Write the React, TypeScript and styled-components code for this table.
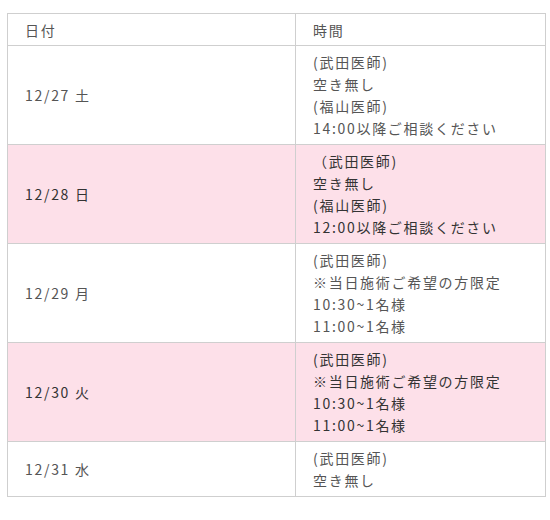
import styled, { createGlobalStyle } from 'styled-components';

const GlobalStyle = createGlobalStyle`
  body {
    margin: 0;
    background: #fff;
    font-family: 'Noto Sans CJK JP', 'Noto Sans', sans-serif;
  }
`;

const rows = [
  { date: '12/27 土', pink: false, lines: ['(武田医師)', '空き無し', '(福山医師)', '14:00以降ご相談ください'] },
  { date: '12/28 日', pink: true, lines: ['（武田医師)', '空き無し', '(福山医師)', '12:00以降ご相談ください'] },
  { date: '12/29 月', pink: false, lines: ['(武田医師)', '※当日施術ご希望の方限定', '10:30~1名様', '11:00~1名様'] },
  { date: '12/30 火', pink: true, lines: ['(武田医師)', '※当日施術ご希望の方限定', '10:30~1名様', '11:00~1名様'] },
  { date: '12/31 水', pink: false, lines: ['(武田医師)', '空き無し'] },
];

const App = () => {
  return (
    <Page>
      <GlobalStyle />
      <Table>
        <colgroup>
          <col style={{ width: 288 }} />
          <col />
        </colgroup>
        <thead>
          <tr>
            <HeadCell>日付</HeadCell>
            <HeadCell>時間</HeadCell>
          </tr>
        </thead>
        <tbody>
          {rows.map((r) => (
            <Row key={r.date} $pink={r.pink}>
              <Cell>{r.date}</Cell>
              <Cell>
                {r.lines.map((l, i) => (
                  <Line key={i}>{l}</Line>
                ))}
              </Cell>
            </Row>
          ))}
        </tbody>
      </Table>
    </Page>
  );
};

const Page = styled.div`
  padding: 13px 4px 0 7px;
`;

const Table = styled.table`
  width: 539px;
  border-collapse: collapse;
  table-layout: fixed;
  font-size: 14px;
  line-height: 22px;
  letter-spacing: 1.7px;
  color: #555;
`;

const HeadCell = styled.th`
  border: 1px solid #cfcfcf;
  padding: 5px 17px 4px;
  text-align: left;
  font-weight: 400;
  color: #555;
`;

const Row = styled.tr<{ $pink: boolean }>`
  background: ${(p) => (p.$pink ? '#fde0e9' : '#fff')};
  color: ${(p) => (p.$pink ? '#333' : '#555')};
`;

const Cell = styled.td`
  border: 1px solid #cfcfcf;
  padding: 5px 17px;
  vertical-align: middle;
`;

const Line = styled.div``;

export default App;
